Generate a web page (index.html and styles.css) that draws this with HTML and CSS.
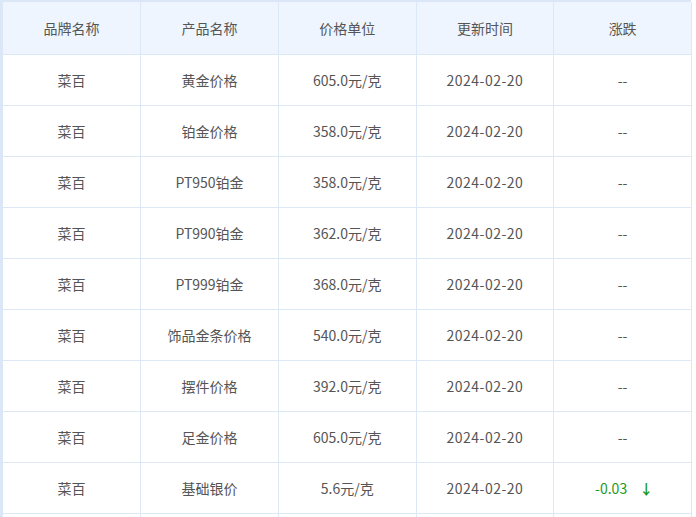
FILE: index.html
```html
<!DOCTYPE html>
<html lang="zh">
<head>
<meta charset="utf-8">
<link rel="stylesheet" href="styles.css">
</head>
<body>
<div class="wrap">
<table class="price">
<thead>
<tr><th>品牌名称</th><th>产品名称</th><th>价格单位</th><th>更新时间</th><th>涨跌</th></tr>
</thead>
<tbody>
<tr><td>菜百</td><td>黄金价格</td><td>605.0元/克</td><td class="date">2024-02-20</td><td>--</td></tr>
<tr><td>菜百</td><td>铂金价格</td><td>358.0元/克</td><td class="date">2024-02-20</td><td>--</td></tr>
<tr><td>菜百</td><td>PT950铂金</td><td>358.0元/克</td><td class="date">2024-02-20</td><td>--</td></tr>
<tr><td>菜百</td><td>PT990铂金</td><td>362.0元/克</td><td class="date">2024-02-20</td><td>--</td></tr>
<tr><td>菜百</td><td>PT999铂金</td><td>368.0元/克</td><td class="date">2024-02-20</td><td>--</td></tr>
<tr><td>菜百</td><td>饰品金条价格</td><td>540.0元/克</td><td class="date">2024-02-20</td><td>--</td></tr>
<tr><td>菜百</td><td>摆件价格</td><td>392.0元/克</td><td class="date">2024-02-20</td><td>--</td></tr>
<tr><td>菜百</td><td>足金价格</td><td>605.0元/克</td><td class="date">2024-02-20</td><td>--</td></tr>
<tr><td>菜百</td><td>基础银价</td><td>5.6元/克</td><td class="date">2024-02-20</td><td class="down">-0.03<span class="arrow">↓</span></td></tr>
<tr class="empty"><td></td><td></td><td></td><td></td><td></td></tr>
</tbody>
</table>
</div>
</body>
</html>
```
FILE: styles.css
```css
html, body {
  margin: 0;
  padding: 0;
  background: #ffffff;
  overflow: hidden;
}
body {
  width: 696px;
  height: 517px;
  font-family: "Noto Sans CJK SC", "Noto Sans", sans-serif;
  font-size: 14px;
  color: #555555;
}
.wrap {
  width: 688px;
  border-left: 3px solid #dbe7f7;
  border-top: 2px solid #dbe7f7;
}
.price {
  width: 689px;
  border-collapse: collapse;
  table-layout: fixed;
}
.price th,
.price td {
  border: 1px solid #dde8f6;
  text-align: center;
  vertical-align: middle;
  padding: 0;
  font-weight: normal;
  line-height: 20px;
}
.price tr:first-child th { border-top: none; }
.price tr th:first-child,
.price tr td:first-child { border-left: none; }
.price th {
  background: #eef5fe;
  height: 52px;
  color: #555555;
}
.price td {
  height: 50px;
}
.price .date {
  letter-spacing: 0.5px;
}
.price .down {
  color: #1d9a1d;
  padding-left: 3px;
}
.arrow {
  display: inline-block;
  margin-left: 12px;
  font-weight: bold;
  color: #1d9a1d;
}
.price .empty td {
  height: 50px;
}
```
